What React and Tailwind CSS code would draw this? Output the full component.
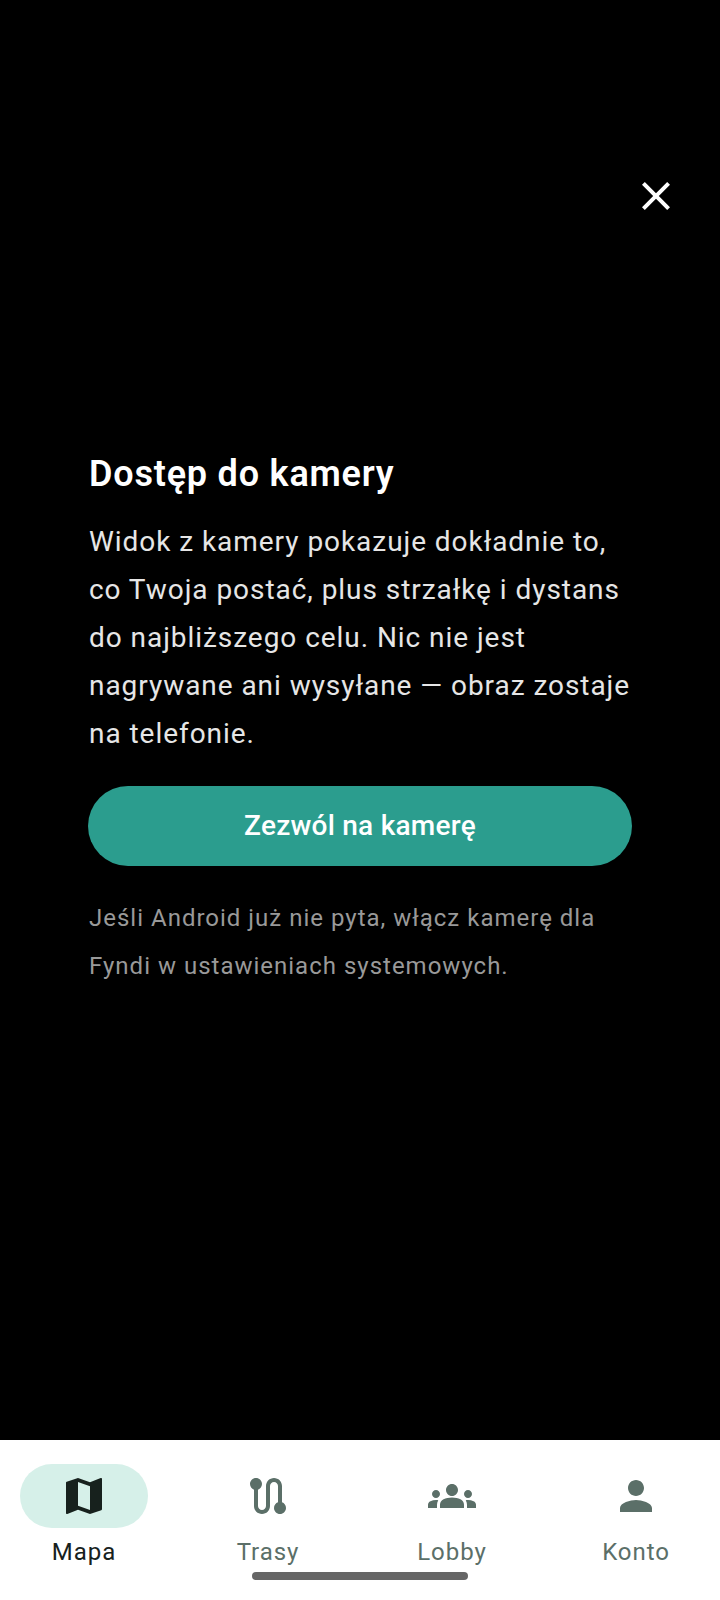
const tabs = [
  {
    label: "Mapa",
    active: true,
    d: "M20.5 3l-.16.03L15 5.1 9 3 3.36 4.9c-.21.07-.36.25-.36.48V20.5c0 .28.22.5.5.5l.16-.03L9 18.9l6 2.1 5.64-1.9c.21-.07.36-.25.36-.48V3.5c0-.28-.22-.5-.5-.5zM15 19l-6-2.11V5l6 2.11V19z",
  },
  {
    label: "Trasy",
    d: "M19 15.18V7c0-2.21-1.79-4-4-4s-4 1.79-4 4v10c0 1.1-.9 2-2 2s-2-.9-2-2V8.82C8.16 8.4 9 7.3 9 6c0-1.66-1.34-3-3-3S3 4.34 3 6c0 1.3.84 2.4 2 2.82V17c0 2.21 1.79 4 4 4s4-1.79 4-4V7c0-1.1.9-2 2-2s2 .9 2 2v8.18c-1.16.41-2 1.51-2 2.82 0 1.66 1.34 3 3 3s3-1.34 3-3c0-1.3-.84-2.4-2-2.82z",
  },
  {
    label: "Lobby",
    d: "M12 12.75c1.63 0 3.07.39 4.24.9 1.08.48 1.76 1.56 1.76 2.73V18H6v-1.61c0-1.18.68-2.26 1.76-2.73 1.17-.52 2.61-.91 4.24-.91zM4 13c1.1 0 2-.9 2-2s-.9-2-2-2-2 .9-2 2 .9 2 2 2zm1.13 1.1c-.37-.06-.74-.1-1.13-.1-.99 0-1.93.21-2.78.58C.48 14.9 0 15.62 0 16.43V18h4.5v-1.61c0-.83.23-1.61.63-2.29zM20 13c1.1 0 2-.9 2-2s-.9-2-2-2-2 .9-2 2 .9 2 2 2zm4 3.43c0-.81-.48-1.53-1.22-1.85-.85-.37-1.79-.58-2.78-.58-.39 0-.76.04-1.13.1.4.68.63 1.46.63 2.29V18H24v-1.57zM12 6c1.66 0 3 1.34 3 3s-1.34 3-3 3-3-1.34-3-3 1.34-3 3-3z",
  },
  {
    label: "Konto",
    d: "M12 12c2.21 0 4-1.79 4-4s-1.79-4-4-4-4 1.79-4 4 1.79 4 4 4zm0 2c-2.67 0-8 1.34-8 4v2h16v-2c0-2.66-5.33-4-8-4z",
  },
];

function NavTab({ tab }) {
  return (
    <div className="flex flex-col items-center">
      <div
        className={`flex h-16 w-32 items-center justify-center rounded-full ${
          tab.active ? "bg-[#d6f0e9]" : ""
        }`}
      >
        <svg
          viewBox="0 0 24 24"
          className={`h-12 w-12 fill-current ${tab.active ? "text-[#17211d]" : "text-[#5b6f68]"}`}
        >
          <path d={tab.d} />
        </svg>
      </div>
      <span
        className={`mt-2 text-2xl leading-8 font-normal tracking-[0.95px] ${
          tab.active ? "text-[#17211d]" : "text-[#5b6f68]"
        }`}
      >
        {tab.label}
      </span>
    </div>
  );
}

export default function App() {
  return (
    <div className="relative flex h-[1600px] w-[720px] flex-col bg-black font-['Roboto',sans-serif]">
      <main className="relative flex flex-1 flex-col justify-center px-[88px] pt-[2px]">
        <button className="absolute top-[172px] left-[632px] h-12 w-12 text-white">
          <svg viewBox="0 0 24 24" className="h-12 w-12 fill-current">
            <path d="M19 6.41 17.59 5 12 10.59 6.41 5 5 6.41 10.59 12 5 17.59 6.41 19 12 13.41 17.59 19 19 17.59 13.41 12z" />
          </svg>
        </button>
        <h1 className="pl-px text-[36px] leading-[44px] font-semibold tracking-[0.8px] text-white">Dostęp do kamery</h1>
        <p className="mt-[22px] pl-px text-[28px] leading-[48px] tracking-[0.95px] text-[#e6e6e6]">
          Widok z kamery pokazuje dokładnie to, co Twoja postać, plus strzałkę i dystans do najbliższego celu. Nic nie jest nagrywane ani wysyłane — obraz zostaje na telefonie.
        </p>
        <button className="mt-7 h-20 w-full rounded-full bg-[#2b9d8e] text-[28px] font-medium tracking-[0.25px] text-white">
          Zezwól na kamerę
        </button>
        <p className="mt-7 pl-px text-2xl leading-[48px] tracking-[1px] text-[#999999]">
          Jeśli Android już nie pyta, włącz kamerę dla Fyndi w ustawieniach systemowych.
        </p>
      </main>
      <nav className="grid h-40 grid-cols-4 gap-4 bg-white pt-6">
        {tabs.map((tab) => (
          <NavTab key={tab.label} tab={tab} />
        ))}
      </nav>
      <div className="absolute top-[1572px] left-[252px] h-2 w-[216px] rounded-full bg-[#666666]" />
    </div>
  );
}
